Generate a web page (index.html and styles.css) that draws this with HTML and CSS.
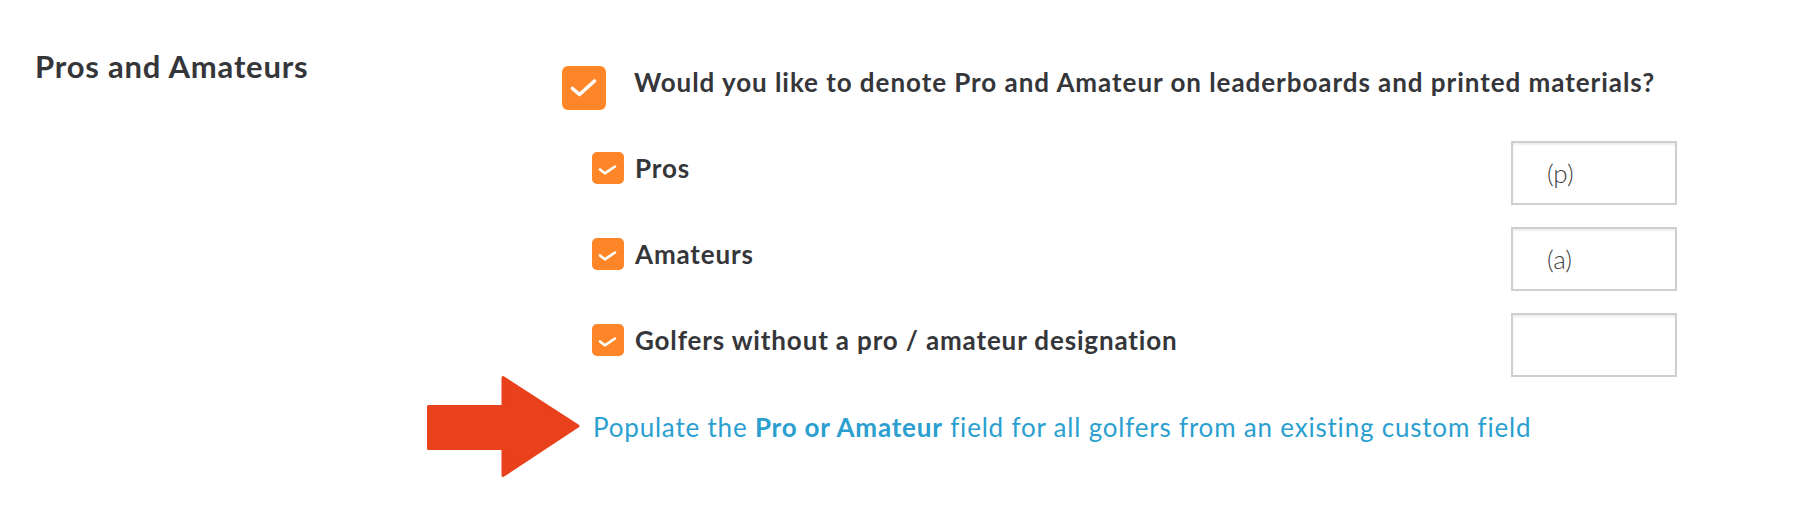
FILE: index.html
```html
<!DOCTYPE html>
<html lang="en">
<head>
<meta charset="utf-8">
<title>Pros and Amateurs</title>
<link rel="stylesheet" href="styles.css">
</head>
<body>
<main class="settings">
  <section class="setting">
    <h2 class="setting-title">Pros and Amateurs</h2>
    <div class="setting-body">
      <div class="question">
        <span class="check check-lg">
          <svg viewBox="0 0 44 44" width="44" height="44"><rect width="44" height="44" rx="6" fill="#fe8628"/><polyline points="10.5,22.5 17.5,28.5 32.5,15" fill="none" stroke="#fff" stroke-width="3.6" stroke-linecap="round" stroke-linejoin="round"/></svg>
        </span>
        <span class="question-text">Would you like to denote Pro and Amateur on leaderboards and printed materials?</span>
      </div>
      <ul class="options">
        <li class="option">
          <label class="option-label">
            <span class="check check-sm"><svg viewBox="0 0 32 32" width="32" height="32"><rect width="32" height="32" rx="5" fill="#fe8628"/><polyline points="8,17.5 12.8,21.3 23,14.5" fill="none" stroke="#fff" stroke-width="2.6" stroke-linecap="round" stroke-linejoin="round"/></svg></span>
            <span class="option-text">Pros</span>
          </label>
          <span class="field"><span class="field-value">(p)</span></span>
        </li>
        <li class="option">
          <label class="option-label">
            <span class="check check-sm"><svg viewBox="0 0 32 32" width="32" height="32"><rect width="32" height="32" rx="5" fill="#fe8628"/><polyline points="8,17.5 12.8,21.3 23,14.5" fill="none" stroke="#fff" stroke-width="2.6" stroke-linecap="round" stroke-linejoin="round"/></svg></span>
            <span class="option-text">Amateurs</span>
          </label>
          <span class="field"><span class="field-value">(a)</span></span>
        </li>
        <li class="option">
          <label class="option-label">
            <span class="check check-sm"><svg viewBox="0 0 32 32" width="32" height="32"><rect width="32" height="32" rx="5" fill="#fe8628"/><polyline points="8,17.5 12.8,21.3 23,14.5" fill="none" stroke="#fff" stroke-width="2.6" stroke-linecap="round" stroke-linejoin="round"/></svg></span>
            <span class="option-text">Golfers without a pro / amateur designation</span>
          </label>
          <span class="field"><span class="field-value"></span></span>
        </li>
      </ul>
      <p class="populate">
        <svg class="arrow" viewBox="0 0 157 106" width="157" height="106"><polygon points="3.5,32.5 78,32.5 78,3.5 153,52 78,101.5 78,74.5 3.5,74.5" fill="#e8411b" stroke="#e8411b" stroke-width="3" stroke-linejoin="round"/></svg>
        <a class="populate-link" href="#">Populate the <strong>Pro or Amateur</strong> field for all golfers from an existing custom field</a>
      </p>
    </div>
  </section>
</main>
</body>
</html>
```

FILE: styles.css
```css
* { box-sizing: border-box; }
html, body { margin: 0; padding: 0; background: #fff; }
body {
  font-family: Lato, "Noto Sans", sans-serif;
  color: #35363a;
  width: 1804px;
  height: 508px;
  overflow: hidden;
}
.settings { padding: 48px 0 0 35px; }
.setting {
  display: grid;
  grid-template-columns: 527px 1115px;
}
.setting-title {
  margin: 0;
  font-size: 31px;
  line-height: 36px;
  font-weight: 700;
  letter-spacing: 0.8px;
}
.setting-body { padding-top: 18px; }
.question {
  display: flex;
  align-items: flex-start;
  gap: 28px;
}
.check { display: block; flex: none; }
.check svg { display: block; }
.question-text {
  font-size: 26px;
  line-height: 32px;
  font-weight: 700;
  letter-spacing: 0.95px;
  white-space: nowrap;
}
.options {
  list-style: none;
  margin: 31px 0 0;
  padding: 0 0 0 30px;
  display: flex;
  flex-direction: column;
  gap: 22px;
}
.option {
  display: flex;
  justify-content: space-between;
  align-items: flex-start;
}
.option-label {
  display: flex;
  align-items: center;
  gap: 11px;
  margin-top: 11px;
}
.option-text {
  font-size: 26px;
  line-height: 32px;
  font-weight: 700;
  letter-spacing: 0.85px;
}
.field {
  width: 166px;
  height: 64px;
  border: 2px solid #cfcfcf;
  box-shadow: inset 0 2px 2px rgba(0,0,0,0.07);
  display: flex;
  align-items: center;
  padding-left: 34px;
}
.field-value {
  font-size: 26px;
  font-weight: 300;
  color: #3f3f3f;
}
.populate {
  position: relative;
  margin: 35px 0 0;
  padding-left: 31px;
  font-size: 26px;
  line-height: 30px;
  letter-spacing: 0.8px;
  white-space: nowrap;
}
.populate-link {
  color: #2a9fd0;
  text-decoration: none;
}
.populate-link strong { font-weight: 700; }
.arrow {
  position: absolute;
  left: -137px;
  top: -38px;
}
```
